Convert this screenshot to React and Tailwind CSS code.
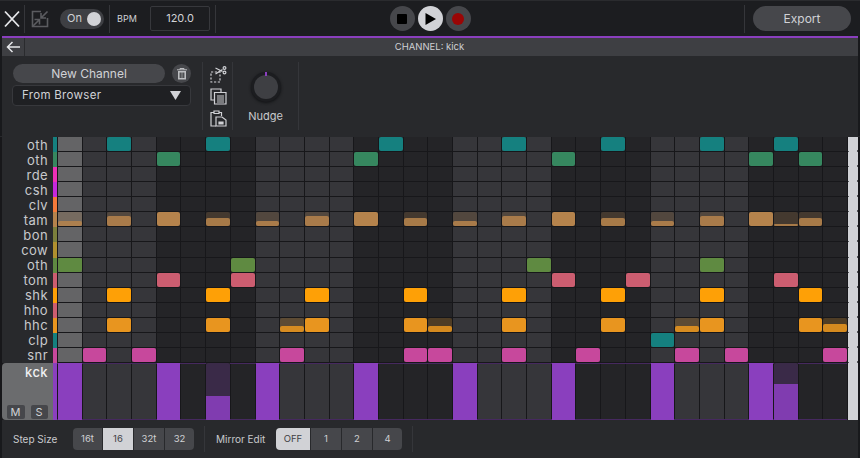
import React from "react";

const P = "#8a3fbe";
const tracks = [
  { n: "oth", c: "#15807f", s: { 2: 1, 6: 1, 13: 1, 18: 1, 22: 1, 26: 1, 29: 1 } },
  { n: "oth", c: "#36875f", s: { 4: 1, 12: 1, 20: 1, 28: 1, 30: 1 } },
  { n: "rde", c: "#ee2fb8", s: {} },
  { n: "csh", c: "#c628dc", s: {} },
  { n: "clv", c: "#f57a3a", s: {} },
  { n: "tam", c: "#b5834c", s: { 0: 0.4, 2: 0.72, 4: 1, 6: 0.6, 8: 0.4, 10: 0.72, 12: 1, 14: 0.6, 16: 0.4, 18: 0.72, 20: 1, 22: 0.6, 24: 0.4, 26: 0.72, 28: 1, 29: 0.2, 30: 0.6 } },
  { n: "bon", c: "#7b7f3c", s: {} },
  { n: "cow", c: "#b0902f", s: {} },
  { n: "oth", c: "#5f8a41", s: { 0: 1, 7: 1, 19: 1, 26: 1 } },
  { n: "tom", c: "#cc5d70", s: { 4: 1, 7: 1, 20: 1, 23: 1, 29: 1 } },
  { n: "shk", c: "#fea006", s: { 2: 1, 6: 1, 10: 1, 14: 1, 18: 1, 22: 1, 26: 1, 30: 1 } },
  { n: "hho", c: "#cc5d70", s: {} },
  { n: "hhc", c: "#e8951f", s: { 2: 1, 6: 1, 9: 0.4, 10: 1, 14: 1, 15: 0.4, 18: 1, 22: 1, 25: 0.4, 26: 1, 30: 1, 31: 0.55 } },
  { n: "clp", c: "#15807f", s: { 24: 1 } },
  { n: "snr", c: "#c7489c", s: { 1: 1, 3: 1, 9: 1, 14: 1, 15: 1, 18: 1, 21: 1, 25: 1, 27: 1, 31: 1 } },
];
const kick = { 0: 1, 4: 1, 6: 0.43, 8: 1, 12: 1, 16: 1, 20: 1, 24: 1, 28: 1, 29: 0.64 };
const steps = Array.from({ length: 32 }, (_, i) => i);

function Cell({ i, v, color, first, big }) {
  const light = Math.floor(i / 4) % 2 === 0;
  const base = first ? "#646466" : light ? "#36363a" : "#242427";
  return (
    <div className={`relative overflow-hidden ${big && v > 0 ? "-my-px" : ""}`} style={{ background: base }}>
      {v > 0 && v < 1 && <div className="absolute inset-0 rounded-[2px]" style={{ background: color, opacity: 0.22 }} />}
      {v > 0 && <div className={`absolute bottom-0 left-0 right-0 ${big ? "" : "rounded-[2px]"}`} style={{ background: color, height: `${v * 100}%`, opacity: v < 1 ? 0.88 : 1 }} />}
    </div>
  );
}

function Sep({ h = "h-[28px]" }) {
  return <div className={`w-px bg-[#35363a] shrink-0 ${h}`} />;
}

function Seg({ items, active }) {
  return (
    <div className="flex gap-px h-[22px] rounded-[4px] overflow-hidden">
      {items.map(([t, w]) => (
        <div key={t} className={`flex items-center justify-center text-[9.5px] ${t === active ? "bg-[#d1d2d6] text-[#3f4044]" : "bg-[#46474b] text-[#d0d1d4]"}`} style={{ width: w }}>
          {t}
        </div>
      ))}
    </div>
  );
}

function ScrollSeg() {
  return (
    <div className="relative w-[10px] shrink-0 bg-[#d1d2d6] mr-[2px] ml-[1px]">
      <div className="absolute bottom-0 left-0 w-px h-px bg-[#55565a]" />
      <div className="absolute bottom-0 right-0 w-[1px] h-[2px] bg-[#55565a]" />
    </div>
  );
}

export default function App() {
  return (
    <div className="w-[860px] h-[458px] overflow-hidden bg-[#18191c] text-[#d1d2d6] font-['Inter',sans-serif] flex flex-col">
      {/* top bar */}
      <div className="h-[36px] shrink-0 flex items-center bg-[#1c1d20] border-t border-[#2a2b2e]">
        <svg width="18" height="18" viewBox="0 0 18 18" className="ml-[3px] mr-[3px]" fill="none" stroke="#e6e7ea" strokeWidth="1.8"><path d="M2 1.5 L16 16.5 M16 1.5 L2 16.5" /></svg>
        <Sep />
        <svg width="18" height="18" viewBox="0 0 18 18" className="ml-[6px] mr-[11px]" fill="none" stroke="#5b5c60" strokeWidth="1.6"><path d="M10 1.5 H1.5 V16.5 H16.5 V8" /><path d="M2 16 L8 10 M3.5 9.5 H8.5 V14.5" /><path d="M16.5 1.5 L10 8 M10 3 V8 H15" /></svg>
        <div className="w-[44px] h-[20px] rounded-full bg-[#3e3f43] flex items-center justify-between pl-[7px] pr-[3px] text-[11px] text-[#cfd0d3]">
          <span>On</span>
          <div className="w-[14px] h-[14px] rounded-full bg-[#d1d2d6]" />
        </div>
        <div className="w-[5px]" />
        <Sep />
        <span className="text-[9px] ml-[7px] w-[33px]">BPM</span>
        <div className="w-[60px] h-[25px] border border-[#37383c] rounded-[2px] flex items-center justify-center text-[11px]">120.0</div>
        <div className="w-[5px]" />
        <Sep />
        <div className="flex-1 flex items-center justify-center gap-[3px] pr-[100px]">
          <div className="w-[25px] h-[25px] rounded-full bg-[#46474b] flex items-center justify-center"><div className="w-[10px] h-[10px] rounded-[1px] bg-black" /></div>
          <div className="w-[25px] h-[25px] rounded-full bg-[#d1d2d6] flex items-center justify-center">
            <svg width="13" height="14" viewBox="0 0 13 14"><path d="M1.5 1 L12 7 L1.5 13 Z" fill="#000" /></svg>
          </div>
          <div className="w-[25px] h-[25px] rounded-full bg-[#46474b] flex items-center justify-center"><div className="w-[12px] h-[12px] rounded-full bg-[#9a0505]" /></div>
        </div>
        <Sep />
        <div className="w-[98px] h-[25px] ml-[8px] mr-[9px] rounded-full bg-[#46474b] flex items-center justify-center text-[12px]">Export</div>
      </div>
      <div className="mx-[2px] h-[2px] shrink-0 bg-[#8a3fbe]" />

      {/* channel bar */}
      <div className="mx-[2px] h-[18px] shrink-0 bg-[#3e3f43] flex items-center relative">
        <div className="w-[23px] h-full border-r border-[#2a2b2e] flex items-center justify-center">
          <svg width="15" height="12" viewBox="0 0 15 12" fill="none" stroke="#e6e7ea" strokeWidth="1.5"><path d="M14 6 H1.5 M6.5 1 L1.5 6 L6.5 11" /></svg>
        </div>
        <div className="flex-1 text-center text-[9.5px] pr-[24px] text-[#cfd0d3]">CHANNEL: kick</div>
      </div>

      {/* panel */}
      <div className="mx-[2px] h-[80px] shrink-0 bg-[#28292c] flex items-start">
        <div className="w-[190px] pl-[11px] pt-[8px] shrink-0">
          <div className="flex items-center gap-[7px]">
            <div className="w-[152px] h-[19px] rounded-full bg-[#46474b] flex items-center justify-center text-[12px] text-[#d1d2d6]">New Channel</div>
            <div className="w-[19px] h-[19px] rounded-full bg-[#46474b] flex items-center justify-center">
              <svg width="10" height="12" viewBox="0 0 10 12" fill="none" stroke="#1f2023" strokeWidth="1"><path d="M1 3 H9 V11.5 H1 Z" fill="#bdbec1" stroke="none" /><path d="M3.2 4.5 V10 M5 4.5 V10 M6.8 4.5 V10" /><path d="M0 1.8 H10 M3 1.8 V0.5 H7 V1.8" stroke="#bdbec1" /></svg>
            </div>
          </div>
          <div className="mt-[2px] w-[179px] h-[21px] -ml-px border border-[#37383c] rounded-[4px] bg-[#1f2023] flex items-center justify-between px-[9px] text-[11.5px] tracking-[0.3px]">
            <span>From Browser</span>
            <svg width="11" height="9" viewBox="0 0 11 9"><path d="M0 0 H11 L5.5 9 Z" fill="#d1d2d6" /></svg>
          </div>
        </div>
        <div className="w-[10px]" />
        <div className="w-px h-[68px] mt-[6px] bg-[#35363a]" />
        <div className="w-[29px] flex flex-col items-center gap-[5px] pt-[10px] pl-[1px]">
          <svg width="17" height="17" viewBox="0 0 17 17" fill="none" stroke="#d1d2d6" strokeWidth="1.2"><path d="M1 6 H10 V16 H1 Z" strokeDasharray="2.2 1.6" /><path d="M5.5 2 L12.5 5.5 M5.5 8 L12.5 3.5" /><circle cx="14.5" cy="2" r="1.4" /><circle cx="14.5" cy="6.5" r="1.4" /></svg>
          <svg width="17" height="17" viewBox="0 0 17 17" fill="none" stroke="#d1d2d6" strokeWidth="1.2"><path d="M4 12 H1 V1 H11 V4" /><path d="M4.5 4.5 H16 V16 H4.5 Z" /><path d="M7 7 H14 V15.5 H7 Z" fill="#7a7b7e" stroke="none" /></svg>
          <svg width="17" height="17" viewBox="0 0 17 17" fill="none" stroke="#d1d2d6" strokeWidth="1.2"><path d="M4 2.5 H1 V16 H6" /><path d="M9 2.5 H11.5 V6" /><path d="M4 1 H9 V3.5 H4 Z" /><path d="M6 7 H12 L16 10 V16 H6 Z" /><path d="M9 12 H13 V14 H9 Z" fill="#d1d2d6" /></svg>
        </div>
        <div className="w-px h-[68px] mt-[6px] bg-[#35363a]" />
        <div className="w-[65px] flex flex-col items-center pt-[16px]">
          <div className="relative w-[30px] h-[30px] rounded-full bg-[#1c1d20] blur-[0.4px] flex items-center justify-center shadow-[0_1px_3px_#111214]">
            <div className="w-[24px] h-[24px] rounded-full bg-[#3e3f43]" />
            <div className="absolute top-0 left-[14px] w-[2px] h-[4px] bg-[#8a3fbe]" />
          </div>
          <div className="mt-[6px] text-[11px] text-[#c8c9cc]">Nudge</div>
        </div>
        <div className="w-px h-[68px] mt-[6px] bg-[#35363a]" />
      </div>

      {/* sequencer */}
      <div className="h-[284px] shrink-0 flex flex-col bg-[#17171a] border-t border-[#28292c]">
        <div className="h-[226px] grid grid-rows-[repeat(15,1fr)] shrink-0">
          {tracks.map((t, r) => (
            <div key={r} className="flex pl-[2px]">
              <div className="w-[51px] bg-[#28292c] shrink-0 flex items-center justify-end pr-[5px] pt-[1px] text-[13px] tracking-[0.4px] leading-none text-[#c8c9cc]">{t.n}</div>
              <div className="w-[4px] shrink-0" style={{ background: t.c }} />
              <div className="flex-1 grid grid-cols-[repeat(32,1fr)] gap-[1px] pl-[1px] pb-[1px]">
                {steps.map((i) => (
                  <Cell key={i} i={i} v={t.s[i] || 0} color={t.c} first={i === 0} />
                ))}
              </div>
              <ScrollSeg />
            </div>
          ))}
        </div>
        <div className="flex-1 flex pl-[2px] min-h-0">
          <div className="w-[51px] bg-[#6b6c6e] rounded-l-[4px] shrink-0 flex flex-col justify-between pr-[5px] pt-[2px] pb-[1px] text-[13px] font-medium tracking-[0.4px] text-[#f0f0f2]">
            <div className="text-right leading-[14px]">kck</div>
            <div className="flex gap-[6px] pl-[5px]">
              <div className="w-[18px] h-[14px] rounded-[2px] bg-[#46474b] text-[11px] font-normal flex items-center justify-center text-[#d1d2d6]">M</div>
              <div className="w-[18px] h-[14px] rounded-[2px] bg-[#46474b] text-[11px] font-normal flex items-center justify-center text-[#d1d2d6]">S</div>
            </div>
          </div>
          <div className="w-[4px] shrink-0 bg-[#8a3fbe]" />
          <div className="flex-1 grid grid-cols-[repeat(32,1fr)] gap-[1px] pl-[1px] border-y border-[#46295f]">
            {steps.map((i) => (
              <Cell key={i} i={i} v={kick[i] || 0} color={P} first={false} big />
            ))}
          </div>
          <div className="w-[10px] shrink-0 bg-[#d1d2d6] mr-[2px] ml-[1px]" />
        </div>
      </div>

      {/* bottom */}
      <div className="flex-1 mx-[2px] bg-[#28292c] flex items-center text-[10px] text-[#c8c9cc]">
        <span className="ml-[11px] w-[60px]">Step Size</span>
        <Seg active="16" items={[["16t", 29], ["16", 30], ["32t", 30], ["32", 29]]} />
        <div className="w-[10px]" />
        <Sep h="h-[26px]" />
        <span className="ml-[11px] w-[60px]">Mirror Edit</span>
        <Seg active="OFF" items={[["OFF", 34], ["1", 30], ["2", 30], ["4", 29]]} />
        <div className="w-[10px]" />
        <Sep h="h-[26px]" />
      </div>
    </div>
  );
}
